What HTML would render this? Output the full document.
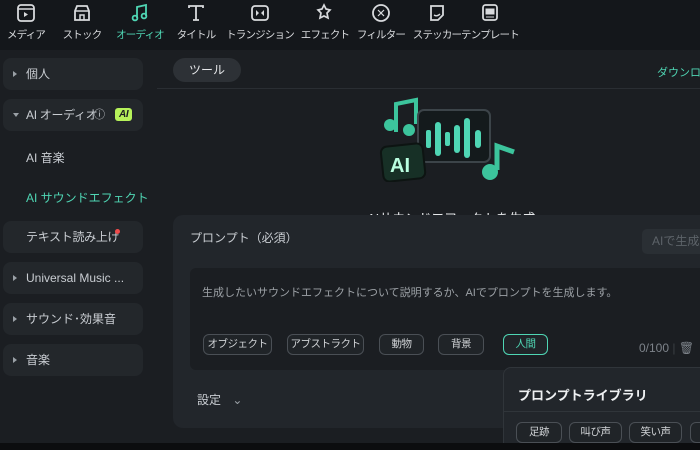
<!DOCTYPE html><html><head><meta charset="utf-8"><style>
*{margin:0;padding:0;box-sizing:border-box}
html,body{width:700px;height:450px;overflow:hidden}
body{background:#1a1d21;font-family:"Liberation Sans","Noto Sans CJK JP",sans-serif;color:#c9cdd2;position:relative;white-space:nowrap}
.top{position:absolute;left:0;top:0;width:700px;height:50px;background:#14171b}
.tab{position:absolute;top:0;width:70px;text-align:center;font-size:10.5px;letter-spacing:-0.8px;color:#d8dadd}
.tab svg{display:block;margin:2px auto 0}
.tab span{display:block;margin-top:3px}
.side{position:absolute;left:0;top:50px;width:157px;height:393px;background:#1b1e22}
.it{position:absolute;left:3px;width:140px;height:32px;background:#23272b;border-radius:8px;font-size:12px;color:#c9cdd2;line-height:32px;padding-left:23px}
.it i{position:absolute;left:10px;top:13px;width:0;height:0;border-left:4px solid #9aa0a6;border-top:3px solid transparent;border-bottom:3px solid transparent}
.sub{position:absolute;left:26px;font-size:12px}
.main{position:absolute;left:157px;top:50px;width:543px;height:393px;background:#1b1e22}
.pill{position:absolute;left:173px;top:58px;width:68px;height:24px;border-radius:12px;background:#2d3136;color:#e6e8ea;font-size:12px;text-align:center;line-height:24px}
.panel{position:absolute;left:173px;top:215px;width:540px;height:213px;background:#22262b;border-radius:10px}
.ta{position:absolute;left:190px;top:268px;width:520px;height:102px;background:#1b1e22;border-radius:6px}
.chip{position:absolute;top:334px;height:21px;border:1px solid #4a4f55;border-radius:6px;font-size:10.5px;letter-spacing:-0.5px;color:#d0d3d6;text-align:center;line-height:19px;background:#202428;overflow:hidden}
.lib{position:absolute;left:503px;top:367px;width:210px;height:90px;background:#22262b;border-radius:8px 0 0 0;border:1px solid #30353a}
.bot{position:absolute;left:0;top:443px;width:700px;height:7px;background:#0c0d0f}
</style></head><body>
<div class="top">
<div class="tab" style="left:-9px"><svg width="22" height="22" viewBox="0 0 22 22"><rect x="3" y="3" width="16" height="16" rx="3" fill="none" stroke="#d8dadd" stroke-width="1.8"/><path d="M3 7h16" stroke="#d8dadd" stroke-width="1.5"/><path d="M9 10l4 2.5-4 2.5z" fill="#d8dadd"/></svg><span>メディア</span></div>
<div class="tab" style="left:47px"><svg width="22" height="22" viewBox="0 0 22 22"><path d="M4 9l2-5h10l2 5v9H4z" fill="none" stroke="#d8dadd" stroke-width="1.8"/><path d="M4 9h14M9 18v-5h4v5" stroke="#d8dadd" stroke-width="1.5" fill="none"/></svg><span>ストック</span></div>
<div class="tab" style="left:105px;color:#4fd6b4"><svg width="22" height="22" viewBox="0 0 22 22"><path d="M8 16V5l9-2v11" fill="none" stroke="#4fd6b4" stroke-width="1.8"/><circle cx="6" cy="16" r="2.4" fill="none" stroke="#4fd6b4" stroke-width="1.8"/><circle cx="15" cy="14" r="2.4" fill="none" stroke="#4fd6b4" stroke-width="1.8"/></svg><span>オーディオ</span></div>
<div class="tab" style="left:161px"><svg width="22" height="22" viewBox="0 0 22 22"><path d="M4 6V4h14v2M11 4v14M8 18h6" fill="none" stroke="#d8dadd" stroke-width="1.8"/></svg><span>タイトル</span></div>
<div class="tab" style="left:225px"><svg width="22" height="22" viewBox="0 0 22 22"><rect x="3" y="4" width="16" height="14" rx="3" fill="none" stroke="#d8dadd" stroke-width="1.8"/><path d="M7 8l3 3-3 3zM15 8l-3 3 3 3z" fill="#d8dadd"/></svg><span>トランジション</span></div>
<div class="tab" style="left:290px"><svg width="22" height="22" viewBox="0 0 22 22"><path d="M10 3l2 4 4 1-3 3 1 5-4-2-4 2 1-5-3-3 4-1z" fill="none" stroke="#d8dadd" stroke-width="1.7"/></svg><span>エフェクト</span></div>
<div class="tab" style="left:346px"><svg width="22" height="22" viewBox="0 0 22 22"><circle cx="11" cy="11" r="8" fill="none" stroke="#d8dadd" stroke-width="1.8"/><path d="M8 8l6 6M8 14l6-6" stroke="#d8dadd" stroke-width="1.2"/></svg><span>フィルター</span></div>
<div class="tab" style="left:402px"><svg width="22" height="22" viewBox="0 0 22 22"><path d="M5 4h12v9l-5 5H5z" fill="none" stroke="#d8dadd" stroke-width="1.8"/><path d="M8 13q3 2 6-1" stroke="#d8dadd" stroke-width="1.4" fill="none"/></svg><span>ステッカー</span></div>
<div class="tab" style="left:455px"><svg width="22" height="22" viewBox="0 0 22 22"><rect x="4" y="3" width="14" height="15" rx="2.5" fill="none" stroke="#d8dadd" stroke-width="1.8"/><path d="M7 7h8v5H7zM7 15h8" fill="#d8dadd" stroke="#d8dadd" stroke-width="1"/></svg><span>テンプレート</span></div>
</div>
<div class="side">
<div class="it" style="top:8px"><i></i>個人</div>
<div class="it" style="top:49px;letter-spacing:-0.3px"><i style="border-left:3px solid transparent;border-right:3px solid transparent;border-top:4px solid #9aa0a6;border-bottom:0;top:14px;left:10px"></i>AI オーディオ<span style="position:absolute;left:91px;top:0;font-size:11px">ⓘ</span><span style="position:absolute;left:112px;top:9px;background:#b6f25a;color:#1a1d21;font-weight:bold;font-style:italic;font-size:10px;line-height:13px;padding:0 4px;border-radius:3px">AI</span></div>
<div class="sub" style="top:99px">AI 音楽</div>
<div class="sub" style="top:139px;color:#4fd6b4">AI サウンドエフェクト</div>
<div class="it" style="top:171px;letter-spacing:-0.3px">テキスト読み上げ<span style="position:absolute;left:112px;top:8px;width:5px;height:5px;border-radius:50%;background:#f04b4b"></span></div>
<div class="it" style="top:212px"><i></i>Universal Music ...</div>
<div class="it" style="top:253px"><i></i>サウンド･効果音</div>
<div class="it" style="top:294px"><i></i>音楽</div>
</div>
<div class="main"><div style="position:absolute;left:0;top:38px;width:543px;height:1px;background:#2a2e33"></div></div>
<div class="pill">ツール</div>
<div style="position:absolute;left:657px;top:64px;font-size:11px;color:#4fd6b4">ダウンロード</div>
<svg style="position:absolute;left:378px;top:92px" width="145" height="90" viewBox="0 0 145 90">
<path d="M18 40V12l20-4v24" fill="none" stroke="#3cc49c" stroke-width="4"/><circle cx="12" cy="33" r="6" fill="#3cc49c"/><circle cx="31" cy="38" r="6" fill="#3cc49c"/>
<rect x="40" y="18" width="72" height="52" rx="6" fill="#141a1c" stroke="#3c4449" stroke-width="2"/>
<g fill="#4fd6b4"><rect x="48" y="38" width="5" height="18" rx="2"/><rect x="57" y="30" width="6" height="34" rx="3"/><rect x="67" y="40" width="5" height="14" rx="2"/><rect x="76" y="33" width="6" height="28" rx="3"/><rect x="86" y="26" width="6" height="40" rx="3"/><rect x="97" y="38" width="6" height="18" rx="3"/></g>
<rect x="4" y="53" width="42" height="35" rx="6" transform="rotate(-6 25 70)" fill="#173026" stroke="#0d1412" stroke-width="2"/>
<text x="12" y="80" font-family="Liberation Sans" font-weight="bold" font-size="20" fill="#b9ffe0">AI</text>
<path d="M119 78V54l17 6" fill="none" stroke="#3cc49c" stroke-width="5"/><circle cx="112" cy="80" r="8" fill="#3cc49c"/>
</svg>
<div style="position:absolute;left:367px;top:208px;font-size:13px;color:#e6e8ea">AIサウンドエフェクトを生成</div>
<div class="panel"></div>
<div style="position:absolute;left:190px;top:229px;font-size:12px;color:#c9cdd2">プロンプト（必須）</div>
<div style="position:absolute;left:642px;top:229px;width:70px;height:25px;background:#2a2f34;border-radius:5px;color:#5d6369;font-size:12px;line-height:25px;padding-left:10px">AIで生成</div>
<div class="ta"></div>
<div style="position:absolute;left:202px;top:284px;font-size:11px;color:#9ca1a6">生成したいサウンドエフェクトについて説明するか、AIでプロンプトを生成します。</div>
<div class="chip" style="left:203px;width:69px">オブジェクト</div>
<div class="chip" style="left:287px;width:77px">アブストラクト</div>
<div class="chip" style="left:379px;width:45px">動物</div>
<div class="chip" style="left:438px;width:46px">背景</div>
<div class="chip" style="left:503px;width:45px;border-color:#4fd6b4;color:#4fd6b4">人間</div>
<div style="position:absolute;left:639px;top:341px;font-size:12px;color:#7d838a">0/100 <span style="color:#3a3f44">|</span> 🗑</div>
<div style="position:absolute;left:197px;top:391px;font-size:12px;color:#c9cdd2">設定 <span style="margin-left:8px;color:#9aa0a6">⌄</span></div>
<div class="lib">
<div style="position:absolute;left:14px;top:17px;font-size:13px;color:#eef0f2;font-weight:bold">プロンプトライブラリ</div>
<div style="position:absolute;left:0;top:43px;width:210px;height:1px;background:#30353a"></div>
<div class="chip" style="top:54px;left:12px;width:46px">足跡</div>
<div class="chip" style="top:54px;left:65px;width:53px">叫び声</div>
<div class="chip" style="top:54px;left:125px;width:53px">笑い声</div>
<div class="chip" style="top:54px;left:186px;width:40px"></div>
</div>
<div class="bot"></div>
</body></html>
